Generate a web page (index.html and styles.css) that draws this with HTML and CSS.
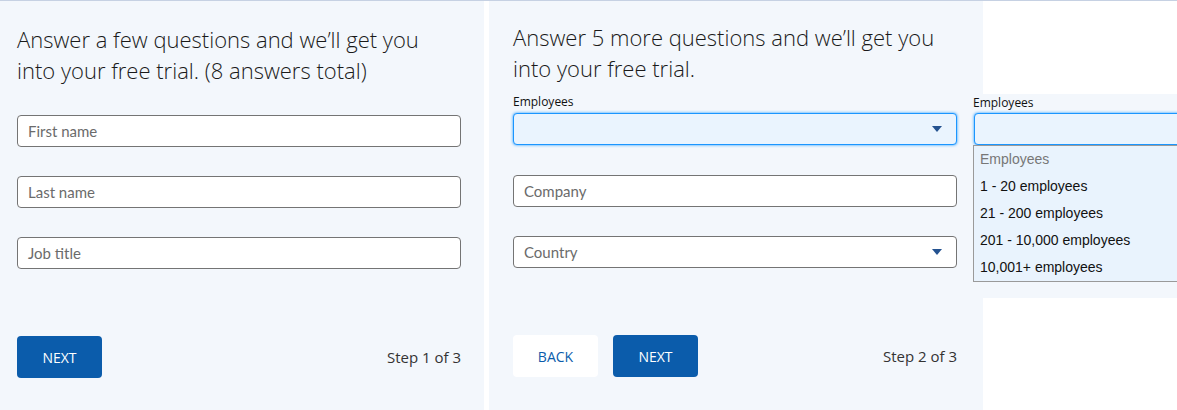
FILE: index.html
```html
<!DOCTYPE html>
<html lang="en">
<head>
  <meta charset="UTF-8">
  <meta name="viewport" content="width=device-width, initial-scale=1.0">
  <title>Free trial signup</title>
  <link rel="stylesheet" href="styles.css">
</head>
<body>
  <div class="panel step-one">
    <h2 class="title">Answer a few questions and we’ll get you into your free trial. (8 answers total)</h2>
    <div class="fields">
      <div class="field"><div class="input">First name</div></div>
      <div class="field"><div class="input">Last name</div></div>
      <div class="field"><div class="input">Job title</div></div>
    </div>
    <div class="actions">
      <span class="btn btn-primary">NEXT</span>
      <span class="step">Step 1 of 3</span>
    </div>
  </div>

  <div class="panel step-two">
    <h2 class="title">Answer 5 more questions and we’ll get you into your free trial.</h2>
    <div class="fields">
      <div class="field">
        <label class="label">Employees</label>
        <div class="input select focus"><span></span><i class="caret"></i></div>
      </div>
      <div class="field"><div class="input">Company</div></div>
      <div class="field"><div class="input select"><span>Country</span><i class="caret"></i></div></div>
    </div>
    <div class="actions">
      <span class="btn btn-neutral">BACK</span>
      <span class="btn btn-primary">NEXT</span>
      <span class="step">Step 2 of 3</span>
    </div>
  </div>

  <!-- open state of the employees picker -->
  <div class="picker">
    <label class="label">Employees</label>
    <div class="input focus picker-box"></div>
    <ul class="options">
      <li class="muted">Employees</li>
      <li>1 - 20 employees</li>
      <li>21 - 200 employees</li>
      <li>201 - 10,000 employees</li>
      <li>10,001+ employees</li>
    </ul>
  </div>
</body>
</html>
```

FILE: styles.css
```css
html, body {
  margin: 0;
  padding: 0;
}

body {
  position: relative;
  display: flex;
  align-items: flex-start;
  height: 410px;
  box-sizing: border-box;
  border-top: 1px solid #c6d1e3;
  background: #fff;
  font-family: Lato, "Open Sans", sans-serif;
  color: #222;
  overflow: hidden;
}

.panel {
  height: 409px;
  box-sizing: border-box;
  background: #f3f7fc;
  padding-top: 23px;
}
.step-one {
  width: 484px;
  padding-left: 17px;
  padding-right: 23px;
}
.step-two {
  width: 494px;
  margin-left: 5px;
  padding-top: 21px;
  padding-left: 24px;
  padding-right: 26px;
}

.title {
  margin: 0;
  font-family: "Open Sans", sans-serif;
  font-weight: 300;
  font-size: 22px;
  line-height: 31px;
  color: #1a1a1a;
  height: 62px;
}

.field {
  height: 61px;
  display: flex;
  flex-direction: column;
  justify-content: flex-end;
}
.step-two .field + .field {
  height: 61.5px;
}

.label {
  display: block;
  font-family: "Open Sans", sans-serif;
  font-size: 12px;
  line-height: 14px;
  color: #111;
  margin-bottom: 4px;
}

.input {
  display: flex;
  align-items: center;
  justify-content: space-between;
  height: 32px;
  box-sizing: border-box;
  padding: 0 14px 0 10px;
  border: 1px solid #747474;
  border-radius: 4px;
  background: #fff;
  font-size: 15px;
  color: #6b6b6b;
}
.input.focus {
  border-color: #1b96ff;
  background: #eaf4fe;
  box-shadow: 0 0 3px #1b96ff;
}
.caret {
  width: 0;
  height: 0;
  border-left: 5px solid transparent;
  border-right: 5px solid transparent;
  border-top: 6px solid #245290;
}

.actions {
  display: flex;
  align-items: center;
  gap: 16px;
  margin-top: 67px;
}
.step-two .actions {
  gap: 15px;
  margin-top: 67px;
}
.btn {
  display: inline-flex;
  align-items: center;
  justify-content: center;
  width: 85px;
  height: 42px;
  border-radius: 4px;
  font-family: "Open Sans", sans-serif;
  font-size: 14px;
}
.btn-primary {
  background: #0b5cab;
  color: #fff;
}
.btn-neutral {
  background: #fff;
  color: #0b5cab;
}
.step {
  margin-left: auto;
  font-family: "Open Sans", sans-serif;
  font-size: 15px;
  color: #333;
}

.picker {
  position: absolute;
  top: 93px;
  left: 963px;
  right: 0;
  height: 204px;
  padding-left: 10px;
  background: #f3f7fc;
  overflow: hidden;
}
.picker .label {
  margin-top: 2px;
  margin-bottom: 3px;
}
.picker-box {
  margin-left: 1px;
  width: 240px;
}
.options {
  list-style: none;
  margin: 0;
  padding: 0;
  width: 240px;
  border: 1px solid #9a9a9a;
  background: #e9f3fd;
  font-family: "Liberation Sans", Arial, sans-serif;
  font-size: 14px;
  color: #111;
}
.options li {
  height: 27px;
  line-height: 27px;
  padding-left: 6px;
}
.options .muted {
  color: #777;
}
```
